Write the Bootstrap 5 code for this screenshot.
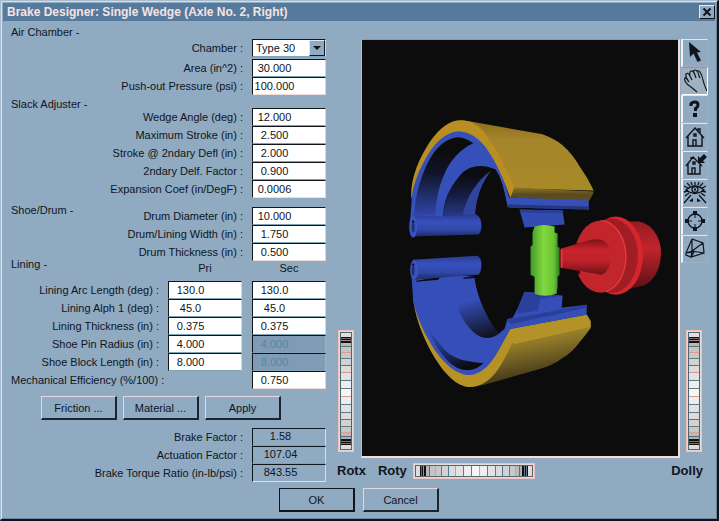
<!DOCTYPE html>
<html lang="en">
<head>
<meta charset="utf-8">
<meta name="viewport" content="width=device-width, initial-scale=1">
<title>Brake Designer</title>
<link href="https://cdn.jsdelivr.net/npm/bootstrap@5.3.0/dist/css/bootstrap.min.css" rel="stylesheet">
<style>
:root{--face:#8faac1;--ink:#10151c;--pink:#f3dcd8}
body{font-family:"Liberation Sans",Arial,sans-serif;font-size:11px;line-height:14px;color:var(--ink);background:var(--face)}
.dialog{border:1px solid #a9bccd;border-right:2px solid var(--ink);border-bottom:2px solid var(--ink);box-shadow:inset 1px 1px 0 #d9e1e8,inset -1px -1px 0 #6b859c;padding:2px}
.titlebar{background:#557a9c;color:#f6e3e4;height:18px;font-size:12px;line-height:18px}
.closer{width:16px;height:14px;background:var(--face);border:1px solid;border-color:#e6ebf0 var(--ink) var(--ink) #e6ebf0}
.form-pane{width:323px;flex:none}
.sect{padding-left:8px}
.sect.drum{padding-top:5px}
.sect.lining{margin-top:-4px}
.rows{padding-top:11px}
.drum .rows{padding-top:4px}
.air .rows{padding-bottom:2px}
.frow{height:18px}
.frow.first{margin:3px 0 2px}
.frow label{padding-right:9px;text-align:right;white-space:nowrap}
.fld,.fld-head{width:74px;flex:none}
.fld{height:18px;border:1px solid;border-color:var(--ink) #f0cfc9 #7fa2b5 var(--ink);background:#fff;color:var(--ink);padding:0 29px 0 0;text-align:center;border-radius:0;outline:0;font-size:11px;line-height:15px}
.fld:disabled{background:#809bb3;color:#5089ab;border-right-color:#9cb3c6}
.fld.result{background:var(--face);padding-right:17px;border-right-color:#e6d7d8;display:block}
.rows .frow:last-child .fld,.frow.last .fld{border-bottom-color:#f0dcd8}
.head-row{padding-bottom:6px}
select.fld{display:block;padding:0 0 0 3px;text-align:left;appearance:none}
.drop{right:1px;top:1px;width:16px;height:16px;background:var(--face);border:1px solid;border-color:#dfe6ec var(--ink) var(--ink) #dfe6ec;pointer-events:none}
.gapcol{margin-left:10px}
.btn-line{padding:7px 0 8px 38px;gap:6px}
.push{width:76px;height:24px;padding:0;border:1px solid;border-color:#e3d9dd #1b2530 #1b2530 #e3d9dd;border-right-width:2px;border-bottom-width:2px;background:var(--face);color:var(--ink);font-size:11px;line-height:14px}
.push.main{border-color:var(--ink)}
.view-pane{padding:18px 7px 0 11px}
.scene{background:#0c0c0c;border:1px solid;border-color:#8a9cab var(--pink) var(--pink) #d5b8b4;border-right-width:2px;border-bottom-width:2px;min-width:0}
.tools{width:28px;padding-left:1px}
.tool{width:27px;height:28px;padding:0;background:var(--face);border:1px solid;border-color:#f1dfdc #a6aebb #a6aebb #eef2f5;border-left-width:2px}
.tool.on{background:#9fb2c2;border-color:#8799a9 #fff #fff #a6aebb}
.tool svg,.closer svg,.drop svg{display:block;margin:auto}
.wheel-col{width:24px;padding:0 0 6px 1px}
.tools .wheel{margin:0 0 6px 5px}
.wheel{appearance:none;margin:0;padding:6px 1px;border:1px solid #efc3ba;outline:1px solid #4d6672;outline-offset:-3px;width:16px;height:122px;background-color:#d5d8db;background-origin:content-box,border-box;background-clip:content-box,border-box;background-repeat:no-repeat;
 --d:180deg;
 background-image:linear-gradient(var(--d),#111 0 1px,#667 1px 2px,#111 2px 3px,#a88 3px 4px,#111 4px 6px,#b9b9b9 6px 9px,#55707c 9px 10px,#c4c4c4 10px 15px,#d99f93 15px 16px,#c8c8c8 16px 21px,#607c88 21px 22px,#d2d2d2 22px 28px,#437f92 28px 29px,#dcdcdc 29px 35px,#cf9a8e 35px 36px,#e2e2e2 36px 43px,#607c88 43px 44px,#eee 44px 51px,#607c88 51px 52px,#f6f6f6 52px 59px,#d99f93 59px 60px,#eee 60px 67px,#607c88 67px 68px,#e2e2e2 68px 75px,#607c88 75px 76px,#dcdcdc 76px 82px,#437f92 82px 83px,#d2d2d2 83px 89px,#607c88 89px 90px,#c8c8c8 90px 95px,#d99f93 95px 96px,#bbb 96px 99px,#55707c 99px 100px,#b0b0b0 100px 102px,#111 102px 104px,#678 104px 105px,#111 105px 106px,#678 106px 107px,#111 107px),linear-gradient(#e3dcdb,#e3dcdb)}
.wheel.flat{--d:90deg;width:122px;height:16px;padding:1px 6px;margin-left:6px}
.wheel::-webkit-slider-thumb{appearance:none;width:1px;height:1px;opacity:0}
.axis{font-size:13px;line-height:16px;font-weight:700}
.axis .roty{margin-left:12px}
.view-foot{height:30px;padding:5px 5px 0 0}
.foot{padding:0 0 5px}
</style>
<script src="https://cdn.jsdelivr.net/npm/bootstrap@5.3.0/dist/js/bootstrap.bundle.min.js"></script>
</head>
<body>
<main class="dialog d-flex flex-column min-vh-100">
  <header class="titlebar d-flex align-items-center justify-content-between ps-1">
    <strong>Brake Designer: Single Wedge (Axle No. 2, Right)</strong>
    <button class="closer p-0" type="button" aria-label="Close"><svg width="10" height="10" viewBox="0 0 10 10"><path d="M1.500 1.500l7 7M8.500 1.500l-7 7" stroke="#10151c" stroke-width="2"/></svg></button>
  </header>

  <div class="d-flex flex-grow-1">
    <form class="form-pane d-flex flex-column" id="brake">
      <section class="sect air d-flex pt-1">
        <div>Air Chamber -</div>
        <div class="rows flex-grow-1">
          <div class="frow first d-flex align-items-center justify-content-end"><label for="chamber">Chamber :</label>
            <div class="position-relative"><select class="fld" id="chamber"><option>Type 30</option></select><span class="drop position-absolute"><svg width="14" height="14" viewBox="0 0 14 14"><path d="M3 5h8l-4 4z" fill="#10151c"/></svg></span></div></div>
          <div class="frow d-flex align-items-center justify-content-end"><label for="area">Area (in^2) :</label><input class="fld" id="area" value="30.000"></div>
          <div class="frow d-flex align-items-center justify-content-end"><label for="press">Push-out Pressure (psi) :</label><input class="fld" id="press" value="100.000"></div>
        </div>
      </section>

      <section class="sect d-flex">
        <div>Slack Adjuster -</div>
        <div class="rows flex-grow-1">
          <div class="frow d-flex align-items-center justify-content-end"><label for="wedge">Wedge Angle (deg) :</label><input class="fld" id="wedge" value="12.000"></div>
          <div class="frow d-flex align-items-center justify-content-end"><label for="stroke">Maximum Stroke (in) :</label><input class="fld" id="stroke" value="2.500"></div>
          <div class="frow d-flex align-items-center justify-content-end"><label for="defl">Stroke @ 2ndary Defl (in) :</label><input class="fld" id="defl" value="2.000"></div>
          <div class="frow d-flex align-items-center justify-content-end"><label for="factor">2ndary Delf. Factor :</label><input class="fld" id="factor" value="0.900"></div>
          <div class="frow d-flex align-items-center justify-content-end"><label for="coef">Expansion Coef (in/DegF) :</label><input class="fld" id="coef" value="0.0006"></div>
        </div>
      </section>

      <section class="sect drum d-flex">
        <div>Shoe/Drum -</div>
        <div class="rows flex-grow-1">
          <div class="frow d-flex align-items-center justify-content-end"><label for="dia">Drum Diameter (in) :</label><input class="fld" id="dia" value="10.000"></div>
          <div class="frow d-flex align-items-center justify-content-end"><label for="width">Drum/Lining Width (in) :</label><input class="fld" id="width" value="1.750"></div>
          <div class="frow d-flex align-items-center justify-content-end"><label for="thick">Drum Thickness (in) :</label><input class="fld" id="thick" value="0.500"></div>
        </div>
      </section>

      <section class="sect lining">
        <div class="head-row d-flex"><div class="me-auto">Lining -</div><div class="text-center pt-1 fld-head">Pri</div><div class="text-center pt-1 fld-head gapcol">Sec</div></div>
        <div class="frow d-flex align-items-center justify-content-end"><label for="arc1">Lining Arc Length (deg) :</label><input class="fld" id="arc1" value="130.0"><input class="fld gapcol" aria-label="Arc length, secondary" value="130.0"></div>
        <div class="frow d-flex align-items-center justify-content-end"><label for="alph1">Lining Alph 1 (deg) :</label><input class="fld" id="alph1" value="45.0"><input class="fld gapcol" aria-label="Alph 1, secondary" value="45.0"></div>
        <div class="frow d-flex align-items-center justify-content-end"><label for="lth1">Lining Thickness (in) :</label><input class="fld" id="lth1" value="0.375"><input class="fld gapcol" aria-label="Thickness, secondary" value="0.375"></div>
        <div class="frow d-flex align-items-center justify-content-end"><label for="pin1">Shoe Pin Radius (in) :</label><input class="fld" id="pin1" value="4.000"><input class="fld gapcol" aria-label="Pin radius, secondary" value="4.000" disabled></div>
        <div class="frow d-flex align-items-center justify-content-end"><label for="block1">Shoe Block Length (in) :</label><input class="fld" id="block1" value="8.000"><input class="fld gapcol" aria-label="Block length, secondary" value="8.000" disabled></div>
        <div class="frow last d-flex align-items-center justify-content-between"><label for="eff">Mechanical Efficiency (%/100) :</label><input class="fld" id="eff" value="0.750"></div>
      </section>

      <div class="btn-line d-flex">
        <button class="push" type="button">Friction ...</button>
        <button class="push" type="button">Material ...</button>
        <button class="push" type="button">Apply</button>
      </div>

      <div class="rows pt-0">
        <div class="frow d-flex align-items-center justify-content-end"><label for="bf">Brake Factor :</label><output class="fld result" id="bf">1.58</output></div>
        <div class="frow d-flex align-items-center justify-content-end"><label for="af">Actuation Factor :</label><output class="fld result" id="af">107.04</output></div>
        <div class="frow d-flex align-items-center justify-content-end"><label for="tr">Brake Torque Ratio (in-lb/psi) :</label><output class="fld result" id="tr">843.55</output></div>
      </div>
    </form>

    <section class="view-pane flex-grow-1 d-flex flex-column">
      <div class="d-flex flex-grow-1">
        <div class="wheel-col d-flex align-items-end flex-shrink-0"><input class="wheel" id="rotx" type="range"></div>
        <div class="scene flex-grow-1 d-flex">
          <svg class="w-100 h-100" viewBox="363 40 315 415" role="img" aria-label="Brake assembly">
            <defs>
              <linearGradient id="yTop" x1="0" y1="0" x2="0" y2="1"><stop offset="0" stop-color="#8a6c1c"/><stop offset=".25" stop-color="#a5852a"/><stop offset="1" stop-color="#a88a25"/></linearGradient>
              <linearGradient id="yBot" gradientUnits="userSpaceOnUse" x1="540" y1="325" x2="548" y2="370"><stop offset="0" stop-color="#ab8f2a"/><stop offset=".4" stop-color="#8a7428"/><stop offset="1" stop-color="#4a3f1c"/></linearGradient>
              <linearGradient id="brown" x1="0" y1="0" x2="0" y2="1"><stop offset="0" stop-color="#8f7524"/><stop offset=".5" stop-color="#5a4a20"/><stop offset="1" stop-color="#5f4e22"/></linearGradient>
              <linearGradient id="shade" gradientUnits="userSpaceOnUse" x1="0" y1="150" x2="0" y2="215"><stop offset="0" stop-color="#0c0c0c"/><stop offset=".35" stop-color="#10142a"/><stop offset="1" stop-color="#3046a8"/></linearGradient>
              <linearGradient id="shade2" gradientUnits="userSpaceOnUse" x1="0" y1="175" x2="0" y2="226"><stop offset="0" stop-color="#0c0c10"/><stop offset=".4" stop-color="#161d44"/><stop offset="1" stop-color="#3046a8"/></linearGradient>
              <linearGradient id="low" gradientUnits="userSpaceOnUse" x1="440" y1="325" x2="460" y2="369"><stop offset="0" stop-color="#354eb8"/><stop offset=".5" stop-color="#202f70"/><stop offset="1" stop-color="#0c0c10"/></linearGradient>
              <linearGradient id="low2" gradientUnits="userSpaceOnUse" x1="476" y1="298" x2="487" y2="336"><stop offset="0" stop-color="#354eb8"/><stop offset="1" stop-color="#10131f"/></linearGradient>
              <linearGradient id="pinG" x1="0" y1="0" x2="0" y2="1"><stop offset="0" stop-color="#2a3d92"/><stop offset=".35" stop-color="#3850bd"/><stop offset=".7" stop-color="#3048a6"/><stop offset="1" stop-color="#1c2a64"/></linearGradient>
              <linearGradient id="green"><stop offset="0" stop-color="#3f9a28"/><stop offset=".45" stop-color="#83d83f"/><stop offset=".8" stop-color="#68c433"/><stop offset="1" stop-color="#2d7a1f"/></linearGradient>
              <linearGradient id="cone" x1="0" y1="0" x2="0" y2="1"><stop offset="0" stop-color="#7d1519"/><stop offset=".3" stop-color="#c8232a"/><stop offset=".6" stop-color="#c0222a"/><stop offset="1" stop-color="#6c1115"/></linearGradient>
              <linearGradient id="drumR" x1="0" y1="0" x2="0" y2="1"><stop offset="0" stop-color="#961c22"/><stop offset=".4" stop-color="#c0242c"/><stop offset="1" stop-color="#5e1015"/></linearGradient>
            </defs>
            <!-- upper shoe -->
            <path fill="url(#yTop)" d="M460 120L470 121L543 134Q556 139 563 145Q573 154 580 166Q588 177 594 190L515 188L511 197Q500 150 460 120z"/>
            <path fill="#b98f24" d="M412 195C412 176 420 158 431 141C441 127 451 120 461 120C474 120 481 126 489 138C499 152 507 169 515 187L511 198Q500 165 480 150L460 138L430 160L413 200z"/>
            <path fill="url(#brown)" d="M515 187L594 191L593 194L589 201L511 197z"/>
            <path fill="#3650ba" d="M413 194C415 180 424 160 433 148C442 136 452 131 460 131C473 132 481 140 487 148C497 162 505 180 510 197L589 200V209L508 207C505 190 502 178 496 169C482 163 468 165 460 176C447 192 444 203 444 218L411 219z"/>
            <path fill="#24377f" d="M508 204L589 206V209L508 207z"/>
            <path fill="url(#shade)" d="M415 215C416 193 423 172 431 158C440 143 450 137 460 137C466 138 470 140 474 143C460 149 450 162 445 174C439 187 437 200 436 215z"/>
            <path fill="url(#shade2)" d="M444 224C443 206 449 191 456 181C466 167 480 163 495 169L490 172C476 184 468 198 463 216V224z"/>
            <path fill="#2f449c" d="M463 215C467 197 477 180 492 170C481 184 477 199 476 215z"/>
            <path fill="#0c0c0c" d="M476 213C477 198 482 182 493 169L496 169C502 178 505 190 508 207L520 209V240H484V213z"/>
            <path fill="url(#pinG)" d="M414 215L443 216L477 214Q482 217 482 225Q482 232 479 234L414 236z"/>
            <ellipse cx="414" cy="226" rx="4" ry="11" fill="#3a53bf"/><ellipse cx="414" cy="227" rx="1.500" ry="5" fill="#223175"/><path d="M414 220v2" stroke="#0c0c0c" stroke-width="2"/>
            <path fill="#334cb2" d="M520 209L563 210L565 224L525 227z"/>
            <path fill="#2a3f97" d="M520 209L563 210V213L521 212z"/>
            <!-- lower shoe -->
            <path fill="url(#yBot)" d="M470 386L511 328L587 314Q591 319 591 327Q586 334 580 341Q573 351 563 357Q552 365 540 368L484 384z"/>
            <path fill="#b39328" d="M511 328L587 314L591 320V326L515 343L509 340z"/>
            <path fill="#b69226" d="M414 296C415 314 423 334 431 349C443 371 457 386 471 386C491 385 501 366 509 350L515 337L511 328L500 343L470 371L440 353L418 310z"/>
            <path fill="#354eb8" d="M412 270L414 300C417 314 423 328 429 338C438 355 453 373 469 374C484 374 494 359 500 348L511 328L587 314V304L562 307L563 295L525 291L518 308L513 317L508 318L505 328L499 333C486 316 478 299 475 276z"/>
            <path fill="#2a3f98" d="M507 319L587 304V307L512 323z"/>
            <path fill="#2b409a" d="M525 291L563 295L541 298L538 310L518 313L519 306z"/>
            <path fill="url(#low)" d="M421 305C427 325 437 342 450 353C460 360 473 361 484 362C477 370 467 370 461 368C444 363 426 330 421 305z"/>
            <path fill="url(#low2)" d="M453 288C456 306 464 322 474 331C481 338 491 339 499 333C486 315 479 297 475 281L463 277z"/>
            <path fill="#0c0c0c" d="M417 280L441 276L439 279L417 281zM463 277L479 275V277L465 278z"/>
            <path fill="url(#pinG)" d="M414 259L478 255Q482 257 482 264Q482 272 479 274L414 279z"/>
            <ellipse cx="415" cy="269" rx="4" ry="10" fill="#3a53bf"/><ellipse cx="414" cy="270" rx="1.500" ry="5" fill="#223175"/><path d="M414 263v2" stroke="#0c0c0c" stroke-width="2"/>
            <!-- wedge -->
            <path fill="url(#green)" d="M535 226Q544 223 555 226V232L558 233V246L560 247V274L558 276V285L557 293Q545 297 535 293V276L531 274V246L533 244V232z"/>
            <!-- air chamber -->
            <path fill="url(#drumR)" d="M628 221H638C653 223 661 238 661 252C661 268 654 281 643 285L630 288z"/>
            <ellipse cx="616" cy="255" rx="27" ry="39" fill="#d5262e"/>
            <ellipse cx="612" cy="255" rx="26" ry="37" fill="#a01d23"/>
            <ellipse cx="601" cy="256" rx="26" ry="36" fill="#c3252c"/>
            <path d="M601 220A26 36 0 0 1 606 291" fill="none" stroke="#e5404a"/>
            <path fill="#0c0c0c" d="M574 244L580 242V274L577 272L574 271z"/>
            <path fill="url(#cone)" d="M561 248L584 241Q596 237 604 240Q612 245 611 256Q611 270 602 274L584 271L561 267z"/>
            <path d="M562 249V267" stroke="#e2353c" stroke-width="2"/>
          </svg>
        </div>
        <div class="tools flex-shrink-0 d-flex flex-column">
          <button class="tool" type="button" aria-label="Select"><svg width="24" height="26" viewBox="0 0 24 26"><path fill="#10151c" d="M6 2L7 17L10.500 13.500L14.500 22L18 20.500L14 12.500L18 12z"/></svg></button>
          <button class="tool on" type="button" aria-label="Pan"><svg width="24" height="26" viewBox="0 0 24 26"><path fill="none" stroke="#10151c" stroke-width="1.200" d="M14 24L8 19Q4 17 2 13Q1 9 3 10L6 14M6 14Q2 8 3 6Q5 4 7 8L9 12M7 8Q6 4 8 3Q10 2 12 7L13 10M11 5Q10 2 12 2Q15 2 16 8L17 10M14 4Q14 1 17 4Q19 7 20 12Q21 17 24 23"/></svg></button>
          <button class="tool" type="button" aria-label="Help"><svg width="24" height="26" viewBox="0 0 24 26"><path fill="none" stroke="#10151c" stroke-width="3" d="M8 10V8Q9 6 12 6Q15 6 15 9Q15 11 12.500 12.500V15"/><path fill="#10151c" d="M10 17h4v4h-4z"/></svg></button>
          <button class="tool" type="button" aria-label="Home"><svg width="24" height="26" viewBox="0 0 24 26"><path fill="none" stroke="#10151c" stroke-width="1.400" d="M3 14L12 4L21 14M5 12V22H19V12M15 7V5H17V10M10 22V16H13V22M11 10h2v2h-2z"/></svg></button>
          <button class="tool" type="button" aria-label="Set home"><svg width="24" height="26" viewBox="0 0 24 26"><path fill="none" stroke="#10151c" stroke-width="1.400" d="M3 14L10 5L19 14M5 12V22H17V12M8 8V5M9 22V16H12V22M10 10h2v2h-2z"/><path fill="#10151c" d="M15 4V11H22L20 9L24 5L21 2L17 6z"/></svg></button>
          <button class="tool" type="button" aria-label="View all"><svg width="24" height="26" viewBox="0 0 24 26"><path fill="none" stroke="#10151c" stroke-width="1.300" d="M3 10Q12 2 21 10Q12 17 3 10zM12 2V5M8 2L9 5M16 2L15 5M4 3L7 6M20 3L17 6M1 6L5 8M23 6L19 8M1 12L5 11M23 12L19 11M8 15L1 23M16 15L23 23M6 13L2 16M18 13L22 16"/><circle cx="12" cy="9.500" r="3" fill="none" stroke="#10151c" stroke-width="1.300"/><path fill="#10151c" d="M11 8.500h2v2h-2zM6 21L10 18V22zM18 21L14 18V22z"/></svg></button>
          <button class="tool" type="button" aria-label="Seek"><svg width="24" height="26" viewBox="0 0 24 26"><circle cx="12" cy="13" r="7" fill="none" stroke="#10151c" stroke-width="1.400"/><path fill="#10151c" d="M10 3h4v4h-4zM10 19h4v4h-4zM2 11h4v4H2zM18 11h4v4h-4zM11.500 7h1v3h-1zM11.500 16h1v3h-1zM6 12.500h3v1H6zM15 12.500h3v1h-3z"/></svg></button>
          <button class="tool" type="button" aria-label="Perspective"><svg width="24" height="26" viewBox="0 0 24 26"><path fill="none" stroke="#10151c" stroke-width="1.200" d="M9 3L20 7L21 17L8 21L3 19L3 17L9 3L9 15L20 7M3 17L9 15L21 17M9 15L8 21M3 17L11 16L8 21"/></svg></button>
          <div class="mt-auto d-flex"><input class="wheel" id="dolly" type="range"></div>
        </div>
      </div>
      <div class="view-foot d-flex align-items-start axis">
        <label for="rotx">Rotx</label>
        <label for="roty" class="roty">Roty</label>
        <input class="wheel flat" id="roty" type="range">
        <label for="dolly" class="ms-auto">Dolly</label>
      </div>
    </section>
  </div>

  <footer class="foot d-flex justify-content-center gap-2">
    <button class="push main" type="submit" form="brake">OK</button>
    <button class="push" type="button">Cancel</button>
  </footer>
</main>
</body>
</html>
